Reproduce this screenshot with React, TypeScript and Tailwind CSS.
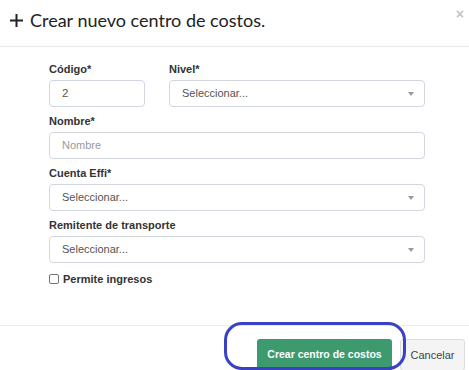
import type { ReactNode } from "react";

function Label({ children }: { children: ReactNode }) {
	return (
		<label className="mb-[4px] block text-[11px] font-bold leading-[14px] text-[#333]">
			{children}
		</label>
	);
}

function SelectBox() {
	return (
		<div className="flex h-[27px] items-center justify-between rounded-[4px] border border-[#d2d6de] bg-white pl-3 pr-[10px]">
			<span className="text-[11px] text-[#555]">Seleccionar...</span>
			<svg width="6" height="4" viewBox="0 0 6 4">
				<path d="M0 0h6L3 4z" fill="#999" />
			</svg>
		</div>
	);
}

export default function App() {
	return (
		<div className="relative h-[370px] w-[469px] overflow-hidden bg-white font-['Liberation_Sans',Arial,sans-serif]">
			<div className="flex h-[47px] items-start justify-between border-b border-[#e9e9e9] pl-[10px] pr-[5px]">
				<div className="mt-[9px] flex items-center gap-[7px]">
					<svg width="13" height="13" viewBox="0 0 13 13">
						<rect x="5.5" y="0" width="2" height="13" fill="#222" />
						<rect x="0" y="5.5" width="13" height="2" fill="#222" />
					</svg>
					<h1 className="font-['Lato',sans-serif] text-[18px] leading-[22px] text-[#222]">
						Crear nuevo centro de costos.
					</h1>
				</div>
				<span className="mt-[7px] text-[14px] font-bold leading-[14px] text-[#c4c4c4]">×</span>
			</div>

			<div className="flex h-[278px] flex-col pl-[49px] pt-[15px]">
				<div className="flex w-[376px] gap-[24px]">
					<div className="w-[96px]">
						<Label>Código*</Label>
						<div className="flex h-[27px] items-center rounded-[4px] border border-[#d2d6de] px-3 text-[11.5px] text-[#555]">
							2
						</div>
					</div>
					<div className="flex-1">
						<Label>Nivel*</Label>
						<SelectBox />
					</div>
				</div>

				<div className="mt-[7px] w-[376px]">
					<Label>Nombre*</Label>
					<div className="flex h-[27px] items-center rounded-[4px] border border-[#d2d6de] px-3 text-[11px] text-[#999]">
						Nombre
					</div>
				</div>

				<div className="mt-[7px] w-[376px]">
					<Label>Cuenta Effi*</Label>
					<SelectBox />
				</div>

				<div className="mt-[7px] w-[376px]">
					<Label>Remitente de transporte</Label>
					<SelectBox />
				</div>

				<div className="mt-[9px] flex items-center gap-[4px]">
					<span className="h-[10px] w-[10px] rounded-[2px] border border-[#767676] bg-white" />
					<span className="text-[11px] font-bold leading-[14px] text-[#333]">Permite ingresos</span>
				</div>
			</div>

			<div className="flex justify-end gap-[8px] border-t border-[#ececec] pr-[4px] pt-[13px]">
				<button className="h-[32px] w-[135px] rounded-[3px] bg-[#3d9a6e] text-[10.5px] font-bold text-white">
					Crear centro de costos
				</button>
				<button className="h-[32px] w-[65px] rounded-[3px] border border-[#ddd] bg-[#f4f4f4] text-[11px] text-[#444]">
					Cancelar
				</button>
			</div>

			<div className="absolute left-[224px] top-[322px] h-[48px] w-[182px] rounded-[18px] border-[3px] border-[#3a41c6]" />
		</div>
	);
}
